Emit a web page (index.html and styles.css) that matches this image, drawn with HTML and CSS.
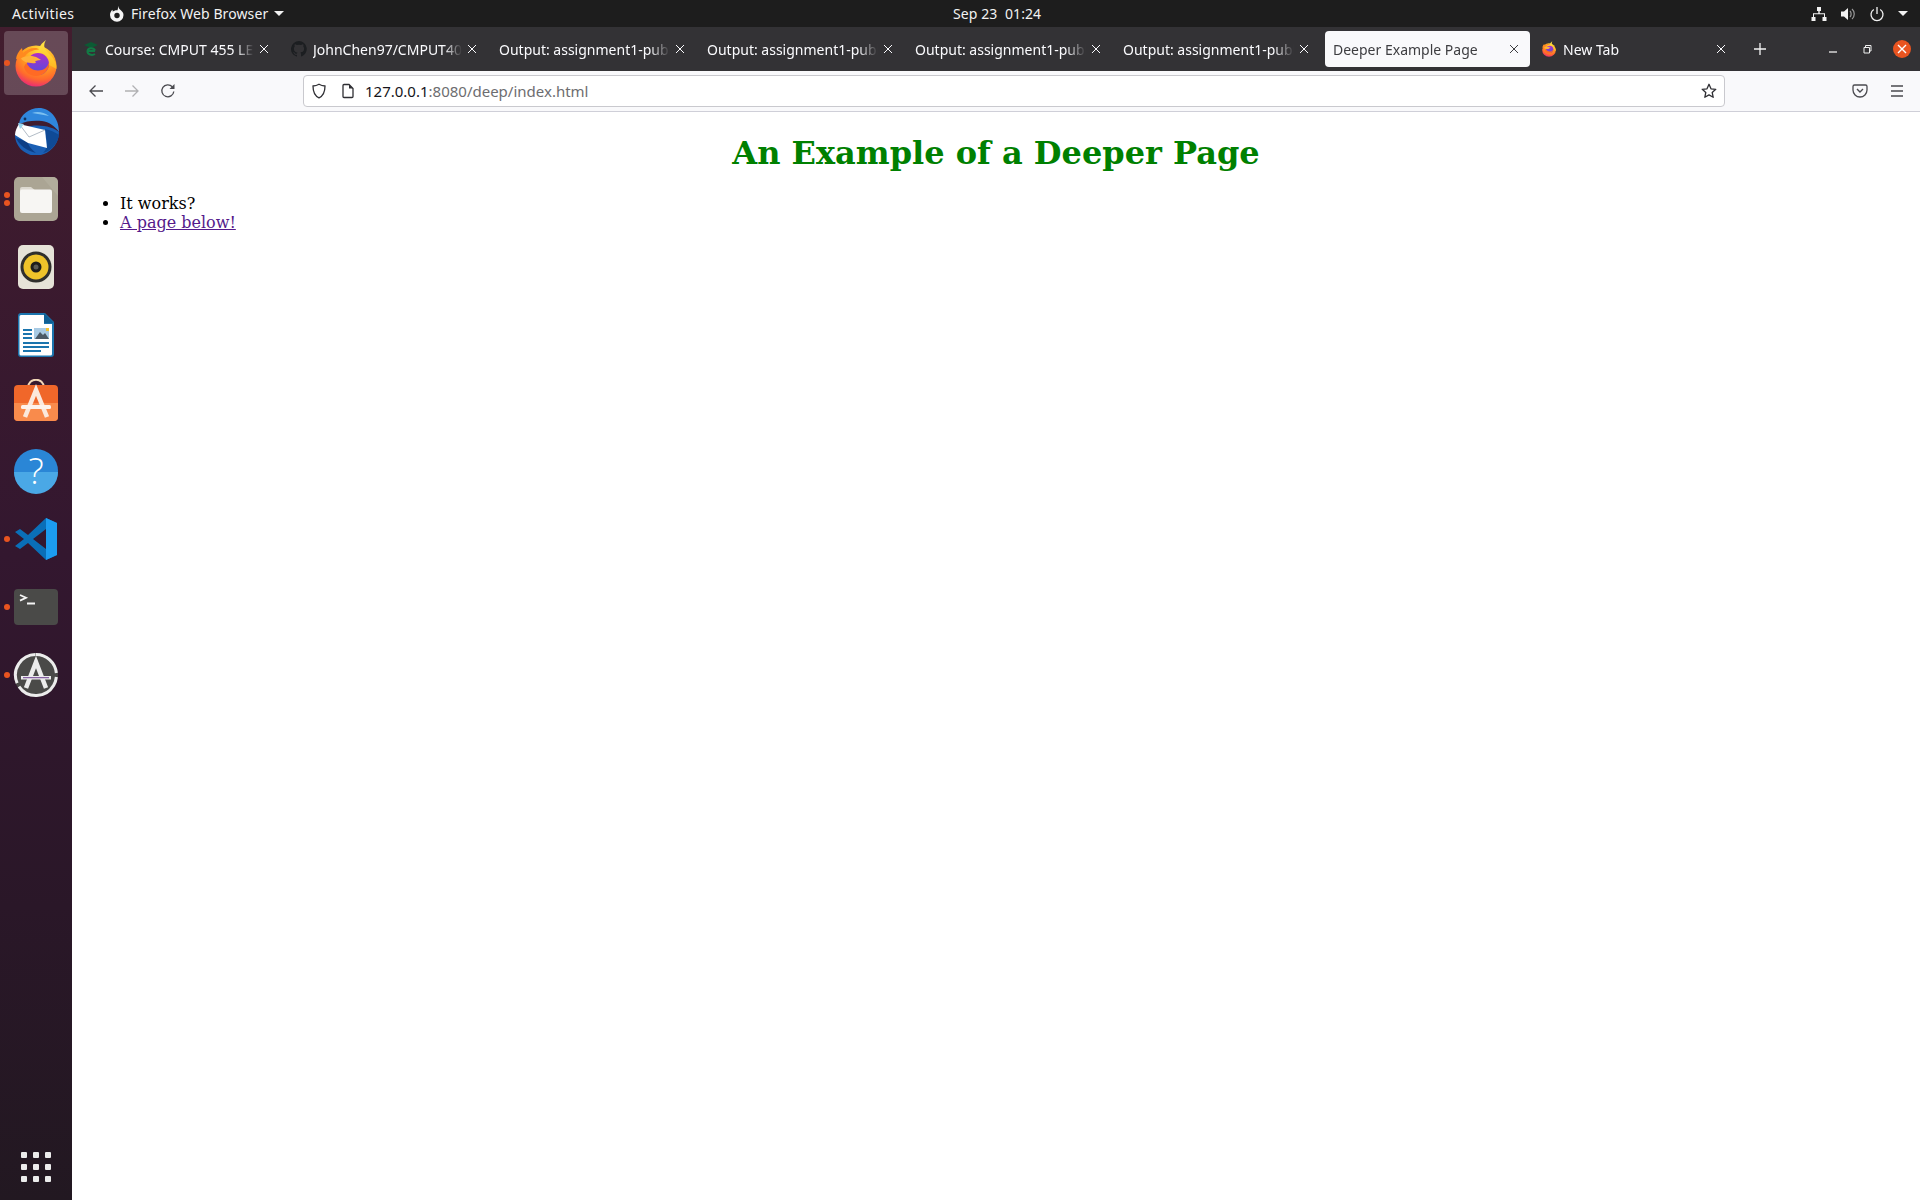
FILE: index.html
```html
<!DOCTYPE html>
<html lang="en">
<head>
    <meta charset="UTF-8">
    <meta name="viewport" content="width=device-width, initial-scale=1.0">
    <title>Deeper Example Page</title>
    <link rel="stylesheet" href="styles.css">
</head>
<body>
    <svg class="defs" width="0" height="0" aria-hidden="true">
        <defs>
            <radialGradient id="ffBody" cx="0.62" cy="0.12" r="0.98">
                <stop offset="0" stop-color="#ffe03a"/>
                <stop offset="0.45" stop-color="#ffa01f"/>
                <stop offset="0.72" stop-color="#ff6a2c"/>
                <stop offset="1" stop-color="#e3148f"/>
            </radialGradient>
            <linearGradient id="ffEar" x1="0.5" y1="0" x2="0.5" y2="1">
                <stop offset="0" stop-color="#ffe747"/>
                <stop offset="1" stop-color="#ffb51f"/>
            </linearGradient>
            <linearGradient id="ffGlobe" x1="0.5" y1="0" x2="0.5" y2="1">
                <stop offset="0" stop-color="#b02fc4"/>
                <stop offset="0.55" stop-color="#7a3fd6"/>
                <stop offset="1" stop-color="#4f4fd8"/>
            </linearGradient>
            <symbol id="firefox" viewBox="0 0 48 48">
                <circle cx="24" cy="27" r="20.500" fill="url(#ffBody)"/>
                <path fill="url(#ffEar)" d="M34 1c-3 5-2 9 2 13 6 5 9 10 8.500 16L30 22c-2-2-4-5-4-8 0-6 4-10 8-13z"/>
                <path fill="#ff8a1f" d="M4 20c.5-4 2.500-8 6-11l1 5c3-3 7-5 12-5 2 0 3 .5 4 1.500-6 0-12 3-14 7-3 1-6 2-9 2.500z"/>
                <circle cx="26" cy="25" r="11" fill="url(#ffGlobe)"/>
                <path fill="#ffb13a" d="M9 19.500c4-2.500 9-3 13-2 3 .5 5 2 7 3.500-3 .5-5 .5-6 1.500 1 .5 1 1 .5 1.500-3 .5-7 0-10-1-2-.7-3.500-2-4.500-3.500z"/>
                <path fill="#ff6a24" d="M14.500 24c2 4 6 7.500 11.500 7.500 6 0 10-3.500 11-8.500 1 7-5 14-13 14-6 0-11-4-12-9 .5-1.500 1.500-3 2.500-4z"/>
            </symbol>
            <symbol id="close" viewBox="0 0 12 12">
                <path stroke="currentColor" stroke-width="1" d="M2 2l8 8M10 2l-8 8"/>
            </symbol>
        </defs>
    </svg>

    <header class="topbar">
        <div class="topbar-left">
            <span class="activities">Activities</span>
            <span class="app-menu">
                <svg class="app-icon" viewBox="0 0 16 16"><path fill="#f4f4f4" d="M10 0c-.5 1.500-.2 2.500 1 3.500 2.500 2 3.500 3.500 3.500 5.500A6.800 6.800 0 0 1 8 15.800 7 7 0 0 1 1 9c0-2 .8-4 2.500-5.300l.3 2C5 4.500 6.500 4 8.500 4.200 9 2.500 9.200 1 10 0z"/><circle cx="8" cy="9.500" r="2.700" fill="#1d1d1d"/></svg>
                Firefox Web Browser
                <span class="caret"></span>
            </span>
        </div>
        <div class="clock">Sep 23&nbsp; 01:24</div>
        <div class="status">
            <svg viewBox="0 0 16 16"><path fill="#f2f2f2" d="M6 1h4v4H8.700v2.200H14V11h1.500v4h-4v-4H13V8.300H3V11h1.500v4h-4v-4H2V7.200h5.300V5H6z"/></svg>
            <svg viewBox="0 0 16 16"><path fill="#f2f2f2" d="M1 5.500h3L8 2v12l-4-3.500H1z"/><path fill="none" stroke="#9a9a9a" stroke-width="1.200" d="M10 5c1.500 1.500 1.500 4.500 0 6M12 3c3 2.500 3 7.500 0 10"/></svg>
            <svg viewBox="0 0 16 16"><path fill="none" stroke="#f2f2f2" stroke-width="1.300" d="M8 1v7M4.800 3.500a6 6 0 1 0 6.400 0"/></svg>
            <span class="caret"></span>
        </div>
    </header>

    <div class="desktop">
        <aside class="dock">
            <div class="dock-item active">
                <span class="dot"></span>
                <svg class="dock-icon" viewBox="0 0 48 48"><use href="#firefox"/></svg>
            </div>
            <div class="dock-item">
                <svg class="dock-icon" viewBox="0 0 48 48">
                    <path fill="#1a5fb4" d="M3 27a21 21 0 0 0 29 20c8-3 15-11 15-22C40 18 14 14 3 27z"/>
                    <path fill="#2f86dc" d="M7 17C8 8 17 1 27 1c11 0 20 10 20 24-4-6-10-10-17-11-8-1-16 0-23 3z"/>
                    <path fill="#7cc0f0" d="M20 6c5-2 12-1 17 3-5-1-11-2-17-3z"/>
                    <path fill="#0f4a96" d="M33 22c5 1 10 3 14 6-1 7-6 14-13 17l-3 1c3-3 4-6 4-10z"/>
                    <path fill="#0d3f86" d="M4 31c3 7 11 13 20 15-5-4-8-8-8-11z"/>
                    <path fill="#fff" d="M7 17l26 6 2 18L16 36 3 28c0-4 2-8 4-11z"/>
                    <path fill="none" stroke="#a9b4c0" stroke-width="0.900" d="M8 18l9 12 16-7"/>
                    <path fill="#9ad6ee" d="M6 16l6 1-4 5z"/>
                    <circle cx="13" cy="12" r="1.400" fill="#10325e"/>
                </svg>
            </div>
            <div class="dock-item">
                <span class="dot double"></span>
                <svg class="dock-icon" viewBox="0 0 48 48">
                    <rect x="2" y="2" width="44" height="44" rx="5" fill="#aba594"/>
                    <path fill="#b8b2a1" d="M30 2h11a5 5 0 0 1 5 5v14z" opacity="0.600"/>
                    <path fill="#dcd9d0" d="M8 14a2 2 0 0 1 2-2h9l5 4v4H8z"/>
                    <rect x="8" y="14.500" width="32" height="23.500" rx="2" fill="#f7f6f3"/>
                </svg>
            </div>
            <div class="dock-item">
                <svg class="dock-icon" viewBox="0 0 48 48">
                    <rect x="6" y="2" width="36" height="44" rx="5" fill="#e6e3d8"/>
                    <circle cx="24" cy="24" r="15.500" fill="#2f2f2c"/>
                    <circle cx="24" cy="24" r="12.500" fill="#eec32a"/>
                    <circle cx="24" cy="24" r="5.500" fill="#1d1d1b"/>
                    <circle cx="24" cy="24" r="2.500" fill="#5a5a55"/>
                </svg>
            </div>
            <div class="dock-item">
                <svg class="dock-icon" viewBox="0 0 48 48">
                    <path fill="#1b75ae" d="M9 2h24l9 9v32a3 3 0 0 1-3 3H9a3 3 0 0 1-3-3V5a3 3 0 0 1 3-3z"/>
                    <path fill="#fff" d="M9 4h23v9h8v30a1.500 1.500 0 0 1-1.500 1.500H9A1.500 1.500 0 0 1 7.500 43V5.500A1.500 1.500 0 0 1 9 4z"/>
                    <path fill="#0f5f94" d="M32 2l10 10H32z"/>
                    <g fill="#1b75ae">
                        <rect x="11" y="18" width="9" height="2"/>
                        <rect x="11" y="22" width="9" height="2"/>
                        <rect x="11" y="26" width="9" height="2"/>
                        <rect x="11" y="31" width="26" height="2"/>
                        <rect x="11" y="35" width="26" height="2"/>
                        <rect x="11" y="39" width="18" height="2"/>
                    </g>
                    <rect x="22" y="17" width="15" height="11" fill="#a9cbe4"/>
                    <path fill="#4c5a66" d="M23 28l5-7 3 3 2-2 4 6z"/>
                    <rect x="34" y="17" width="3" height="3" fill="#f2c230"/>
                </svg>
            </div>
            <div class="dock-item">
                <svg class="dock-icon" viewBox="0 0 48 48">
                    <path fill="none" stroke="#f3d8b8" stroke-width="2" d="M16 9c0-11 16-11 16 0"/>
                    <rect x="2" y="6" width="44" height="36" rx="4" fill="#f0672a"/>
                    <path fill="#f98b4c" d="M2 24h44v14a4 4 0 0 1-4 4H6a4 4 0 0 1-4-4z"/>
                    <path fill="none" stroke="#fbe9dd" stroke-width="4.500" d="M13 38L24 11l11 27"/>
                    <rect x="9" y="26" width="30" height="4" rx="1.500" fill="#fdf3ec"/>
                </svg>
            </div>
            <div class="dock-item">
                <svg class="dock-icon" viewBox="0 0 48 48">
                    <circle cx="24" cy="24" r="22" fill="#2a86d6"/>
                    <path fill="#4aa8e6" d="M2 25h44a22 22 0 0 1-44 0z"/>
                    <text class="help-mark" x="24" y="37" text-anchor="middle">?</text>
                </svg>
            </div>
            <div class="dock-item">
                <span class="dot"></span>
                <svg class="dock-icon" viewBox="0 0 48 48">
                    <path fill="#0a6fb8" d="M34 3l11 5v32l-11 5-18-17-8 6-5-3 9-7-9-7 5-3 8 6zM34 14L21 24l13 10z"/>
                    <path fill="#1c9cf0" d="M34 3l11 5v32l-11 5z"/>
                </svg>
            </div>
            <div class="dock-item">
                <span class="dot"></span>
                <svg class="dock-icon" viewBox="0 0 48 48">
                    <rect x="2" y="6" width="44" height="36" rx="4" fill="#4a4a48"/>
                    <path fill="none" stroke="#f4f4f4" stroke-width="1.800" d="M8 12l6 2.800-6 2.800M15 20.500h8"/>
                </svg>
            </div>
            <div class="dock-item">
                <span class="dot"></span>
                <svg class="dock-icon" viewBox="0 0 48 48">
                    <circle cx="24" cy="24" r="22" fill="#4a4a48"/>
                    <path fill="none" stroke="#ececec" stroke-width="3" stroke-dasharray="30 4 50 4 40 10" d="M24 3.500a20.500 20.500 0 1 1-.1 0z"/>
                    <path fill="none" stroke="#ececec" stroke-width="4.500" d="M14 37l10-26 10 26"/>
                    <rect x="9" y="25" width="30" height="3.500" fill="#ececec"/>
                    <rect x="11" y="26.200" width="26" height="1" fill="#6d3f8f"/>
                </svg>
            </div>
            <div class="show-apps">
                <span></span><span></span><span></span>
                <span></span><span></span><span></span>
                <span></span><span></span><span></span>
            </div>
        </aside>

        <div class="browser">
            <div class="tabstrip">
                <div class="tab">
                    <svg class="favicon" viewBox="0 0 16 16">
                        <path fill="#0c5a34" d="M8 1l7 3-7 3-7-3z"/>
                        <path fill="none" stroke="#127a45" stroke-width="2" d="M12 9.500C11 6.500 5 6 4.500 10c-.3 3.500 4.500 5 7.500 3M5 10h7"/>
                    </svg>
                    <span class="tab-title">Course: CMPUT 455 LEC A1</span>
                    <svg class="tab-close"><use href="#close"/></svg>
                </div>
                <div class="tab">
                    <svg class="favicon" viewBox="0 0 16 16"><path fill="#1c1e21" d="M8 0a8 8 0 0 0-2.500 15.600c.4.100.5-.2.500-.4v-1.400c-2.200.5-2.700-1-2.700-1-.4-.9-.9-1.200-.9-1.200-.7-.5.100-.5.100-.5.800.1 1.200.8 1.200.8.700 1.200 1.900.9 2.300.7.100-.5.300-.9.500-1.100-1.800-.2-3.600-.9-3.600-4 0-.9.300-1.600.8-2.100-.1-.2-.4-1 .1-2.100 0 0 .7-.2 2.200.8a7.600 7.600 0 0 1 4 0c1.500-1 2.200-.8 2.200-.8.500 1.100.2 1.900.1 2.100.5.600.8 1.300.8 2.100 0 3.100-1.900 3.700-3.700 3.900.3.300.6.800.6 1.500v2.200c0 .2.100.5.500.4A8 8 0 0 0 8 0z"/></svg>
                    <span class="tab-title">JohnChen97/CMPUT404-assignment</span>
                    <svg class="tab-close"><use href="#close"/></svg>
                </div>
                <div class="tab">
                    <span class="tab-title">Output: assignment1-public-tests</span>
                    <svg class="tab-close"><use href="#close"/></svg>
                </div>
                <div class="tab">
                    <span class="tab-title">Output: assignment1-public-tests</span>
                    <svg class="tab-close"><use href="#close"/></svg>
                </div>
                <div class="tab">
                    <span class="tab-title">Output: assignment1-public-tests</span>
                    <svg class="tab-close"><use href="#close"/></svg>
                </div>
                <div class="tab">
                    <span class="tab-title">Output: assignment1-public-tests</span>
                    <svg class="tab-close"><use href="#close"/></svg>
                </div>
                <div class="tab selected">
                    <span class="tab-title">Deeper Example Page</span>
                    <svg class="tab-close"><use href="#close"/></svg>
                </div>
                <div class="tab tab-new">
                    <svg class="favicon" viewBox="0 0 48 48"><use href="#firefox"/></svg>
                    <span class="tab-title">New Tab</span>
                    <svg class="tab-close"><use href="#close"/></svg>
                </div>
                <svg class="new-tab" viewBox="0 0 16 16"><path stroke="#f4f4f4" stroke-width="1.300" d="M8 2v12M2 8h12"/></svg>
                <div class="window-controls">
                    <svg viewBox="0 0 16 16"><path stroke="#f0f0f0" stroke-width="1.300" d="M4 11h8"/></svg>
                    <svg viewBox="0 0 16 16"><path fill="none" stroke="#f0f0f0" d="M5 6.500h5.500V12H5zM6.500 6V4.500H12V10h-1"/></svg>
                    <span class="win-close">
                        <svg viewBox="0 0 16 16"><path stroke="#fff" stroke-width="1.400" d="M4 4l8 8M12 4l-8 8"/></svg>
                    </span>
                </div>
            </div>

            <nav class="navbar">
                <div class="nav-buttons">
                    <svg viewBox="0 0 16 16"><path fill="none" stroke="#4a4a4f" stroke-width="1.300" d="M15 8H2M7.500 2.500L2 8l5.500 5.500"/></svg>
                    <svg viewBox="0 0 16 16"><path fill="none" stroke="#b1b1b3" stroke-width="1.300" d="M1 8h13M8.500 2.500L14 8l-5.500 5.500"/></svg>
                    <svg viewBox="0 0 16 16"><path fill="none" stroke="#4a4a4f" stroke-width="1.300" d="M13.800 8.500A6 6 0 1 1 12.300 3.800"/><path fill="#4a4a4f" d="M14.500 1v5h-5z"/></svg>
                </div>
                <div class="urlbar">
                    <svg class="url-icon" viewBox="0 0 16 16"><path fill="none" stroke="#2e2e33" stroke-width="1.300" d="M8 1.200c2 1.200 3.800 1.700 6 1.800 0 6-1.500 9.800-6 11.800C3.500 12.800 2 9 2 3c2.200-.1 4-.6 6-1.800z"/></svg>
                    <svg class="url-icon page-icon" viewBox="0 0 16 16"><path fill="none" stroke="#2e2e33" stroke-width="1.300" d="M3 2.500a1 1 0 0 1 1-1h5L13 5.500V13.500a1 1 0 0 1-1 1H4a1 1 0 0 1-1-1z"/><path fill="#2e2e33" d="M9 1.500L13 5.500H9z"/></svg>
                    <span class="url-text"><b>127.0.0.1</b>:8080/deep/index.html</span>
                    <svg class="url-star" viewBox="0 0 16 16"><path fill="none" stroke="#2e2e33" stroke-width="1.300" stroke-linejoin="round" d="M8 1.300l2 4.500 4.800.5-3.600 3.200 1 4.800L8 11.900l-4.200 2.400 1-4.800L1.200 6.300 6 5.800z"/></svg>
                </div>
                <div class="nav-tools">
                    <svg viewBox="0 0 16 16"><path fill="none" stroke="#4a4a4f" stroke-width="1.300" d="M2.500 2h11A1.500 1.500 0 0 1 15 3.500V7a7 7 0 0 1-14 0V3.500A1.500 1.500 0 0 1 2.500 2z"/><path fill="none" stroke="#4a4a4f" stroke-width="1.400" d="M5 6l3 3 3-3"/></svg>
                    <svg viewBox="0 0 16 16"><path stroke="#4a4a4f" stroke-width="1.300" d="M2 3h12M2 8h12M2 13h12"/></svg>
                </div>
            </nav>

            <main class="page">
                <h1>An Example of a Deeper Page</h1>
                <ul>
                    <li>It works?</li>
                    <li><a href="#below">A page below!</a></li>
                </ul>
            </main>
        </div>
    </div>
</body>
</html>
```

FILE: styles.css
```css
* {
    box-sizing: border-box;
}

html, body {
    margin: 0;
    height: 100%;
}

body {
    display: flex;
    flex-direction: column;
    height: 1200px;
    overflow: hidden;
    background: #fff;
    font-family: "Noto Sans", "Open Sans", sans-serif;
}

.defs {
    position: absolute;
}

/* ubuntu top bar */
.topbar {
    display: grid;
    grid-template-columns: 953px auto 1fr;
    align-items: center;
    height: 27px;
    background: #1d1d1d;
    color: #f2f2f2;
    font-size: 14px;
    letter-spacing: 0.1px;
}

.topbar-left {
    display: flex;
    align-items: center;
    padding-left: 12px;
}

.activities {
    width: 97px;
    letter-spacing: 0.4px;
}

.app-menu {
    display: flex;
    align-items: center;
    gap: 6px;
}

.app-icon {
    width: 16px;
    height: 16px;
}

.caret {
    display: inline-block;
    width: 0;
    height: 0;
    border-left: 5px solid transparent;
    border-right: 5px solid transparent;
    border-top: 5px solid #f2f2f2;
}

.status {
    display: flex;
    align-items: center;
    justify-content: flex-end;
    gap: 13px;
    padding-right: 12px;
}

.status svg {
    width: 16px;
    height: 16px;
}

/* dock */
.desktop {
    display: flex;
    flex: 1;
    min-height: 0;
}

.dock {
    display: flex;
    flex-direction: column;
    flex: none;
    width: 72px;
    padding-top: 2px;
    background: linear-gradient(180deg, #421d2e 0%, #33172f 45%, #2a1728 75%, #221821 100%);
}

.dock-item {
    position: relative;
    display: flex;
    align-items: center;
    justify-content: center;
    height: 68px;
    flex: none;
}

.dock-item.active::before {
    content: "";
    position: absolute;
    top: 2px;
    left: 4px;
    width: 64px;
    height: 64px;
    border-radius: 4px;
    background: rgba(255, 255, 255, 0.2);
}

.dock-icon {
    position: relative;
    width: 48px;
    height: 48px;
}

.dot {
    position: absolute;
    left: 4px;
    top: 31px;
    width: 6px;
    height: 6px;
    border-radius: 50%;
    background: #e95420;
}

.dot.double {
    top: 27px;
    box-shadow: 0 8px 0 #e95420;
}

.help-mark {
    font-family: "Open Sans", sans-serif;
    font-weight: 300;
    font-size: 36px;
    fill: #fff;
}

.show-apps {
    display: grid;
    grid-template-columns: repeat(3, 6px);
    gap: 6px;
    justify-content: center;
    margin-top: auto;
    margin-bottom: 18px;
}

.show-apps span {
    width: 6px;
    height: 6px;
    background: #ececec;
    border-radius: 1px;
}

/* firefox */
.browser {
    display: flex;
    flex-direction: column;
    flex: 1;
    min-width: 0;
}

.tabstrip {
    display: flex;
    align-items: center;
    height: 44px;
    padding-left: 5px;
    background: #333235;
    color: #fbfbfe;
    font-size: 14px;
}

.tab {
    display: flex;
    align-items: center;
    flex: none;
    width: 205px;
    height: 36px;
    margin-right: 3px;
    padding: 0 12px 0 6px;
    border-radius: 4px;
}

.tab.selected {
    padding: 0 10px 0 8px;
    background: #f9f9fb;
    color: #3d3d40;
}

.tab.tab-new {
    padding: 0 11px 0 8px;
}

.favicon {
    flex: none;
    width: 16px;
    height: 16px;
    margin-right: 6px;
}

.tab-title {
    flex: 1;
    min-width: 0;
    overflow: hidden;
    white-space: nowrap;
    -webkit-mask-image: linear-gradient(90deg, #000 88%, transparent);
    mask-image: linear-gradient(90deg, #000 88%, transparent);
}

.tab-close {
    flex: none;
    width: 12px;
    height: 12px;
    margin-left: 4px;
}

.new-tab {
    flex: none;
    width: 16px;
    height: 16px;
    margin-left: 11px;
}

.window-controls {
    display: flex;
    align-items: center;
    gap: 18px;
    margin-left: auto;
    padding-right: 9px;
}

.window-controls svg {
    display: block;
    width: 16px;
    height: 16px;
}

.win-close {
    display: flex;
    align-items: center;
    justify-content: center;
    width: 18px;
    height: 18px;
    border-radius: 50%;
    background: #e95420;
}

.navbar {
    display: flex;
    align-items: center;
    flex: none;
    height: 41px;
    padding: 0 6px 0 5px;
    background: #f9f9fb;
    border-bottom: 1px solid #cfcfd8;
}

.nav-buttons {
    display: flex;
    gap: 20px;
    padding-left: 11px;
    width: 226px;
}

.nav-buttons svg {
    width: 16px;
    height: 16px;
}

.urlbar {
    display: flex;
    align-items: center;
    flex: none;
    width: 1422px;
    height: 32px;
    padding: 0 7px;
    background: #fff;
    border: 1px solid #c9c9ce;
    border-radius: 4px;
    font-size: 15px;
    color: #6d6d70;
}

.url-icon {
    flex: none;
    width: 16px;
    height: 16px;
}

.page-icon {
    margin-left: 13px;
}

.url-text {
    margin-left: 9px;
}

.url-text b {
    font-weight: 400;
    color: #15141a;
}

.url-star {
    width: 16px;
    height: 16px;
    margin-left: auto;
}

.nav-tools {
    display: flex;
    gap: 21px;
    margin-left: auto;
    padding-right: 9px;
}

.nav-tools svg {
    width: 16px;
    height: 16px;
}

/* the page itself */
.page {
    flex: 1;
    padding: 0 8px;
    font-family: "DejaVu Serif", serif;
    font-size: 16px;
    color: #000;
}

.page h1 {
    margin: 22px 0;
    font-size: 32px;
    font-weight: 700;
    color: #008000;
    text-align: center;
}

.page ul {
    margin: 16px 0;
    padding-left: 40px;
}

.page a {
    color: #551a8b;
}
```
